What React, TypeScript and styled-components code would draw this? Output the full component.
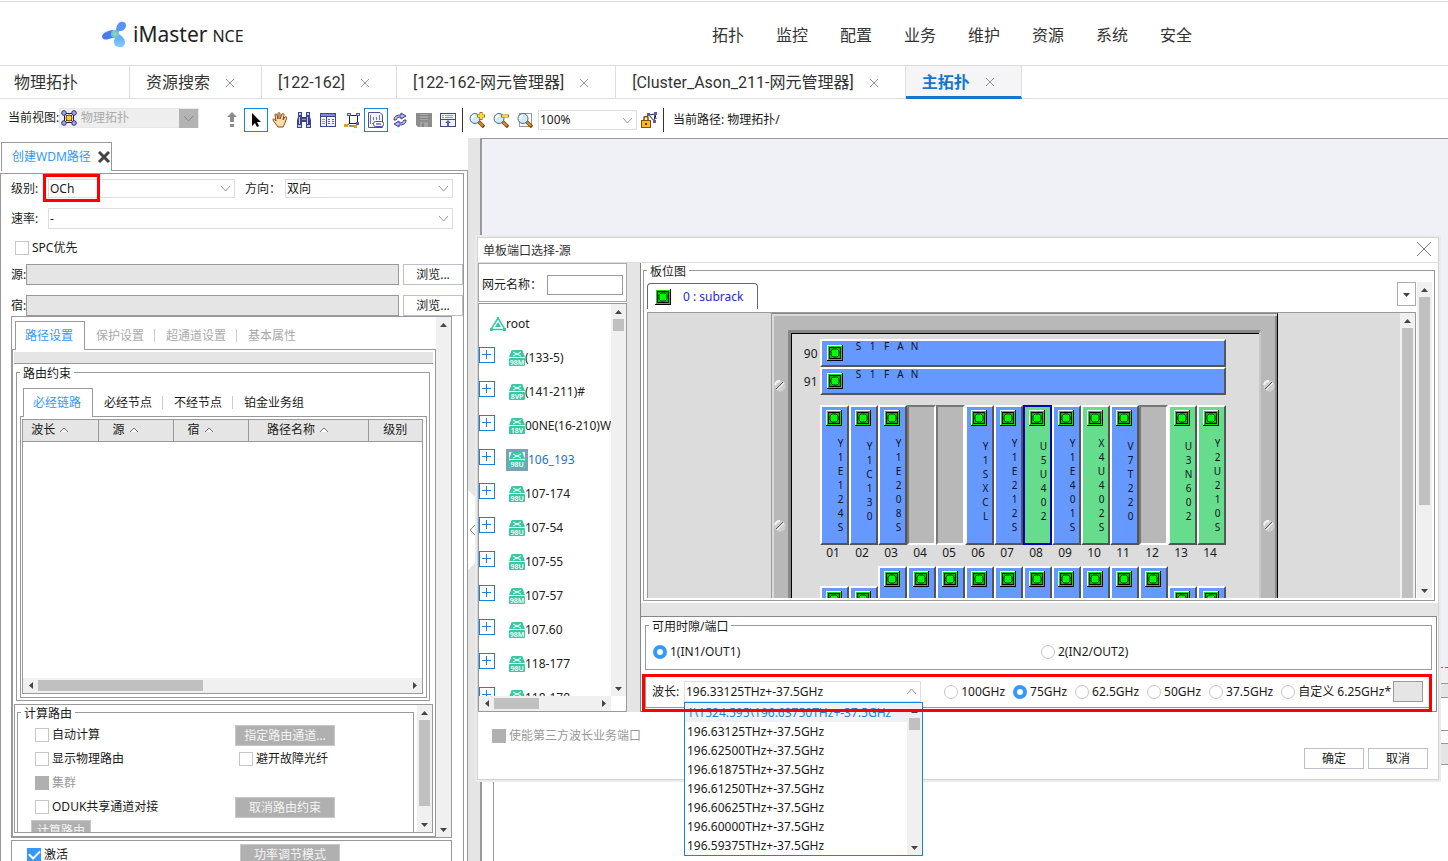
import React, { useState } from "react";
import type { ReactNode } from "react";
import styled, { createGlobalStyle, css } from "styled-components";

const line = "#999999";
const grey = "#e5e5e5";
const blue = "#3399ff";

const GlobalStyle = createGlobalStyle`
  * { box-sizing: border-box; }
  body {
    margin: 0;
    background: #fff;
    color: #1a1a1a;
    font: 12px/16px "Noto Sans", "Noto Sans CJK SC", sans-serif;
  }
  button, input, select { font: inherit; color: inherit; margin: 0; border-radius: 0; outline: none; }
  button { padding: 0; border: 0; background: none; }
  svg { display: block; flex: none; }
  ul { margin: 0; padding: 0; list-style: none; }
`;

/* ---------- page frame ---------- */

const Page = styled.div`
  display: flex;
  flex-direction: column;
  height: 100vh;
  overflow: hidden;
`;

const Header = styled.header`
  display: flex;
  align-items: center;
  height: 65px;
  margin-top: 1px;
  padding: 4px 256px 0 102px;
  border-top: 1px solid #dcdcdc;
  border-bottom: 1px solid #dedede;
`;

const Brand = styled.div`
  display: flex;
  align-items: center;
  gap: 6px;
  padding-bottom: 2px;
  color: #222;
  font-size: 21px;
  line-height: 28px;
`;

const BrandSuffix = styled.span`
  font-size: 16px;
  margin-left: 5px;
`;

const Nav = styled.nav`
  display: flex;
  gap: 32px;
  margin-left: auto;
  a {
    color: #333;
    font: 16px/24px Roboto, "Noto Sans CJK SC", sans-serif;
    text-decoration: none;
  }
`;

const PageTabs = styled.div`
  display: flex;
  flex: none;
  height: 33px;
  border-bottom: 1px solid #dedede;
`;

const PageTab = styled.button<{ $active?: boolean; $plain?: boolean }>`
  display: flex;
  align-items: center;
  gap: 15px;
  padding: ${(p) => (p.$plain ? "2px 51px 0 14px" : "2px 26px 0 16px")};
  border-right: 1px solid #dedede;
  color: #333;
  font: 16px/24px Roboto, "Noto Sans CJK SC", sans-serif;
  ${(p) =>
    p.$active &&
    css`
      margin-bottom: -1px;
      border-bottom: 3px solid #1476d1;
      background: #f5f5f7;
      color: #1476d1;
      font-weight: 700;
      line-height: 21px;
    `}
`;

const Toolbar = styled.div`
  display: flex;
  flex: none;
  height: 39px;
  padding: 9px 0 0 8px;
`;

const ToolLabel = styled.label`
  width: 51px;
  line-height: 20px;
  white-space: nowrap;
`;

const ViewCombo = styled.div`
  display: flex;
  align-items: center;
  width: 140px;
  height: 20px;
  margin-right: 21px;
  padding-left: 1px;
  border: 1px solid #e8e8e8;
  background: #eee;
  color: #aaa;
  select {
    flex: 1;
    height: 18px;
    margin-left: 4px;
    padding: 0;
    border: 0;
    background: none;
    opacity: 1;
    appearance: none;
  }
`;

const ComboArrow = styled.span`
  display: grid;
  place-items: center;
  width: 19px;
  height: 19px;
  background: #b3b3b3;
`;

const ToolButton = styled.button<{ $on?: boolean }>`
  display: grid;
  place-items: center;
  width: 24px;
  height: 24px;
  border: 1px solid ${(p) => (p.$on ? "#1a84d6" : "transparent")};
`;

const ToolDivider = styled.span`
  width: 1px;
  height: 24px;
  margin: 0 2px;
  background: #333;
`;

const PathText = styled.span`
  margin-left: 7px;
  line-height: 24px;
`;

const Body = styled.div`
  position: relative;
  display: flex;
  flex: 1;
  min-height: 0;
`;

/* ---------- shared controls ---------- */

const SelectWrap = styled.div<{ $width?: number; $height?: number }>`
  position: relative;
  display: flex;
  align-items: center;
  width: ${(p) => (p.$width ? `${p.$width}px` : "auto")};
  height: ${(p) => p.$height ?? 19}px;
  padding-right: 3px;
  border: 1px solid #dedede;
  background: #fff;
  select {
    flex: 1;
    min-width: 0;
    height: 100%;
    padding: 0 0 0 1px;
    border: 0;
    background: none;
    appearance: none;
  }
`;

const CheckLabel = styled.label<{ $disabled?: boolean }>`
  display: flex;
  align-items: center;
  gap: 3px;
  color: ${(p) => (p.$disabled ? "#999" : "inherit")};
`;

const CheckBox = styled.input.attrs({ type: "checkbox" })`
  appearance: none;
  display: grid;
  place-items: center;
  width: 14px;
  height: 14px;
  border: 1px solid #c6c6c6;
  background: #fff;
  &:disabled { background: #b0b0b0; border-color: #b0b0b0; }
  &:checked { background: ${blue}; border-color: ${blue}; }
  &:checked::before {
    content: "";
    width: 9px;
    height: 5px;
    margin-top: -3px;
    border: solid #fff;
    border-width: 0 0 2px 2px;
    transform: rotate(-45deg);
  }
`;

const Radio = styled.input.attrs({ type: "radio" })`
  appearance: none;
  width: 14px;
  height: 14px;
  border: 1px solid #c6c6c6;
  border-radius: 50%;
  background: #fff;
  &:checked { border: 4px solid ${blue}; }
`;

const PushButton = styled.button<{ $width: number }>`
  width: ${(p) => p.$width}px;
  height: 21px;
  border: 1px solid #bcc0cc;
  background: #fff;
  line-height: 19px;
  &:disabled {
    border-color: #c8c8c8;
    background: #b0b0b0;
    color: #f4f4f4;
  }
`;

const ReadField = styled.input<{ $width?: number; $filled?: boolean }>`
  width: ${(p) => (p.$width ? `${p.$width}px` : "auto")};
  height: 21px;
  padding: 0 4px;
  border: 1px solid ${line};
  background: ${(p) => (p.$filled ? grey : "#fff")};
`;

const Group = styled.fieldset`
  min-width: 0;
  margin: 0;
  padding: 0 2px 2px 3px;
  border: 1px solid ${line};
  legend {
    height: 15px;
    padding: 0 3px;
    line-height: 17px;
  }
`;

const HighlightFrame = styled.div`
  position: absolute;
  z-index: 3;
  border: 3px solid #f00;
  pointer-events: none;
`;

const LevelFrame = styled(HighlightFrame)`
  top: -6px;
  left: -6px;
  width: 57px;
  height: 28px;
`;

const Bar = styled.div<{ $horizontal?: boolean }>`
  display: flex;
  flex: none;
  flex-direction: ${(p) => (p.$horizontal ? "row" : "column")};
  ${(p) => (p.$horizontal ? "height: 15px;" : "width: 15px;")}
  background: #f0f0f0;
`;

const BarButton = styled.button`
  display: grid;
  place-items: center;
  flex: none;
  width: 15px;
  height: 15px;
`;

const BarTrack = styled.div<{ $horizontal?: boolean }>`
  display: flex;
  flex: 1;
  flex-direction: ${(p) => (p.$horizontal ? "row" : "column")};
  min-width: 0;
  min-height: 0;
  padding: ${(p) => (p.$horizontal ? "2px 0" : "0 2px")};
`;

const BarThumb = styled.div<{ $horizontal?: boolean; $size: number }>`
  ${(p) => (p.$horizontal ? "width" : "height")}: ${(p) => p.$size}px;
  background: #c0c0c0;
`;

const arrows = {
  up: "M0 6L3.500 2L7 6Z",
  down: "M0 2L3.500 6L7 2Z",
  left: "M6 0L2 3.500L6 7Z",
  right: "M2 0L6 3.500L2 7Z",
};

function Arrow({ dir }: { dir: keyof typeof arrows }) {
  return (
    <svg width="7" height="7" viewBox="0 0 7 7">
      <path d={arrows[dir]} fill="#444" />
    </svg>
  );
}

function ScrollBar({ horizontal, thumb, noEnd }: { horizontal?: boolean; thumb?: number; noEnd?: boolean }) {
  return (
    <Bar $horizontal={horizontal}>
      <BarButton type="button" aria-label={horizontal ? "向左" : "向上"}>
        <Arrow dir={horizontal ? "left" : "up"} />
      </BarButton>
      <BarTrack $horizontal={horizontal}>
        {thumb ? <BarThumb $horizontal={horizontal} $size={thumb} /> : null}
      </BarTrack>
      {!noEnd && (
        <BarButton type="button" aria-label={horizontal ? "向右" : "向下"}>
          <Arrow dir={horizontal ? "right" : "down"} />
        </BarButton>
      )}
    </Bar>
  );
}

function Chevron({ up, color = "#999" }: { up?: boolean; color?: string }) {
  return (
    <svg width="11" height="7" viewBox="0 0 11 7">
      <path d={up ? "M1 6L5.500 1L10 6" : "M1 1L5.500 6L10 1"} fill="none" stroke={color} />
    </svg>
  );
}

function Select({ id, value, width, height, children }: { id: string; value: string; width?: number; height?: number; children?: ReactNode }) {
  return (
    <SelectWrap $width={width} $height={height}>
      <select id={id} defaultValue={value}>
        <option>{value}</option>
      </select>
      <Chevron />
      {children}
    </SelectWrap>
  );
}

/* ---------- icons ---------- */

function Logo() {
  return (
    <svg width="25" height="27" viewBox="0 0 25 27">
      <defs>
        <linearGradient id="petal" x1="0" y1="0" x2="0" y2="1">
          <stop offset="0" stopColor="#5ba4fa" />
          <stop offset="1" stopColor="#86ccff" />
        </linearGradient>
      </defs>
      <path d="M14 10C14 6 15 3 18 1C21 0 24 1 24 4C24 8 21 10 18 10C17 10 16 11 16 12Z" fill="#5b93fb" />
      <path d="M11 9C8 9 6 10 4 11C1 12 0 14 0 16C1 19 4 19 7 18C9 17 10 17 12 17Z" fill="#4a7bf5" />
      <path d="M14 16L17 13C19 15 23 17 23 21C23 25 20 27 17 26C13 26 12 23 12 20C12 18 13 17 14 16Z" fill="url(#petal)" />
      <ellipse cx="13" cy="13" rx="4" ry="4" fill="#74c4c4" />
      <ellipse cx="13" cy="13" rx="2" ry="2" fill="#8ad3c4" />
    </svg>
  );
}

function CloseMark({ size = 10, color = "#999", weight = 1 }: { size?: number; color?: string; weight?: number }) {
  return (
    <svg width={size} height={size} viewBox={`0 0 ${size} ${size}`}>
      <path
        d={`M1 1L${size - 1} ${size - 1}M${size - 1} 1L1 ${size - 1}`}
        stroke={color}
        strokeWidth={weight}
        fill="none"
      />
    </svg>
  );
}

function TopologyIcon() {
  return (
    <svg width="16" height="16" viewBox="0 0 16 16">
      <path d="M3 3L13 13M13 3L3 13" stroke="#222" />
      <rect x="3.500" y="3.500" width="9" height="9" fill="none" stroke="#222" />
      <circle cx="8" cy="8" r="3" fill="#ffc933" stroke="#7a4a00" />
      {[[3, 3], [13, 3], [3, 13], [13, 13]].map(([x, y]) => (
        <circle key={`${x}-${y}`} cx={x} cy={y} r="2.300" fill="#a4a4ee" stroke="#33337a" />
      ))}
    </svg>
  );
}

const lens = (
  <>
    <path d="M9 9L15 15" stroke="#7a3f0a" strokeWidth="3.500" />
    <path d="M10 10L14 14" stroke="#e08a2a" strokeWidth="2" />
    <circle cx="6" cy="6.500" r="5" fill="#cfeaf8" stroke="#4a6d8c" />
    <path d="M3 7A3 3 0 0 1 6 3.500" stroke="#fff" strokeWidth="2" fill="none" />
  </>
);

const glyphs: Record<string, ReactNode> = {
  up: <path d="M8 0L13 5H10V10H6V5H3ZM6 12H10V15H6Z" fill="#8c8c8c" />,
  pointer: <path d="M4 1V14L7 11L9 15L11 14L9 10H13Z" fill="#000" />,
  hand: (
    <path
      d="M6 15C4 12 2 10 1 8C1 6 3 7 4 9L3 3C3 1 5 2 5 3L6 7V2C6 0 8 0 8 2V7L10 2C11 1 12 2 12 3L11 8L13 5C15 4 15 6 14 8C13 11 12 13 11 15Z"
      fill="#ffdcae"
      stroke="#8a4510"
    />
  ),
  binoculars: (
    <>
      <path d="M2 0H6V5H10V0H14V5L15 8V16H10V10H6V16H1V8L2 5Z" fill="#3d4388" />
      <path d="M3 1H5V3H3ZM11 1H13V3H11ZM3 5H4V12H3ZM11 5H12V12H11ZM2 13H5V15H2ZM11 13H14V15H11Z" fill="#c3c8f5" />
      <path d="M6 7H10V8H6Z" fill="#8a92dd" />
    </>
  ),
  table: (
    <>
      <rect x="0.500" y="1.500" width="15" height="13" fill="#f3f3ff" stroke="#3d4590" />
      <rect x="1" y="2" width="14" height="2" fill="#8088dc" />
      <path d="M1 4.500H15M6.500 5V14" stroke="#3d4590" />
      <path d="M2 7.500H5M2 9.500H5M2 11.500H5" stroke="#e08a2a" />
      <path d="M8 7.500H10M12 7.500H14M8 9.500H10M12 9.500H14M8 11.500H10M12 11.500H14" stroke="#5a62b5" />
    </>
  ),
  subnet: (
    <>
      <rect x="5.500" y="3.500" width="8" height="8" fill="#fff" stroke="#222" />
      <path d="M6 11L2 14M5 14H13" stroke="#222" />
      <path d="M3 1H7V4H3ZM12 1H16V4H12ZM12 10H15V13H12Z" fill="#5a5ab8" />
      <path d="M4 2H6V3H4ZM13 2H15V3H13Z" fill="#c9c9f6" />
      <path d="M0 12H4V15H0ZM10 13H13V16H10Z" fill="#e6a100" />
    </>
  ),
  export: (
    <>
      <path d="M0.500 0.500H12L14.500 3V15.500H0.500Z" fill="#f3f3ff" stroke="#4a50a0" />
      <path d="M2.500 3V12M4 11.500H6M5.500 8V5M8.500 8V5M11.500 8V3" stroke="#6c75c9" />
      <rect x="5.500" y="9.500" width="10" height="5" rx="2" fill="#fff" stroke="#4a50a0" />
      <path d="M8 12H13" stroke="#8a90dd" strokeWidth="2" />
    </>
  ),
  refresh: (
    <path
      d="M2 8C2 4 5 3 9 3V1L14 4L9 7V5C6 5 5 6 4 8ZM14 8C14 12 11 13 7 13V15L2 12L7 9V11C10 11 11 10 12 8Z"
      fill="#b4b4ee"
      stroke="#3d3d8f"
    />
  ),
  save: (
    <>
      <path d="M0 1H16V15H2L0 13Z" fill="#8c8c8c" />
      <path d="M4 2H12V8H4ZM4 10H12V15H4Z" fill="#a4a4a4" />
      <path d="M4 3.500H12M4 6.500H12" stroke="#868686" />
      <path d="M6 11H8V15H6Z" fill="#868686" />
    </>
  ),
  panel: (
    <>
      <rect x="0.500" y="1.500" width="15" height="13" fill="#f3f3ff" stroke="#3d4590" />
      <path d="M1 7.500H15" stroke="#3d4590" />
      <path d="M2 3.500H4M2 5.500H4" stroke="#e08a2a" />
      <path d="M5 3.500H13M5 5.500H13" stroke="#8a92dd" />
      <path d="M8 8L11 11H9V14H7V11H5Z" fill="#5a62b5" />
    </>
  ),
  zoomIn: (
    <>
      {lens}
      <path d="M12 0V8M8 4H16" stroke="#a07000" strokeWidth="3" />
      <path d="M12 1V7M9 4H15" stroke="#ffd83a" strokeWidth="2" />
    </>
  ),
  zoomOut: (
    <>
      {lens}
      <path d="M8 4H16" stroke="#a07000" strokeWidth="3" />
      <path d="M9 4H15" stroke="#ffd83a" strokeWidth="2" />
    </>
  ),
  zoomArea: (
    <>
      <rect x="2.500" y="1.500" width="12" height="13" fill="none" stroke="#333" strokeDasharray="1 1" />
      {lens}
    </>
  ),
  lock: (
    <>
      <path d="M8 3L14 2L13 9L8 3M14 2L15 7" stroke="#222" fill="none" />
      <path d="M6 1H9V4H6ZM13 0H16V3H13ZM12 8H15V11H12Z" fill="#5a5ab8" />
      <path d="M3 8V6C3 4 7 4 7 6V8" stroke="#7a4a00" strokeWidth="1.500" fill="none" />
      <rect x="0.500" y="8.500" width="9" height="7" fill="#ffb81f" stroke="#8a5200" />
      <path d="M5 11V13" stroke="#5a3400" strokeWidth="2" />
    </>
  ),
};

function Glyph({ name }: { name: string }) {
  return (
    <svg width="16" height="16" viewBox="0 0 16 16">
      {glyphs[name]}
    </svg>
  );
}

function PortIcon() {
  return (
    <svg width="16" height="16" viewBox="0 0 16 16">
      <path d="M0 0H16V16H0Z" fill="#000" />
      <path d="M0 0H15V15H0Z" fill="#fff" />
      <path d="M1 1H15V15H1Z" fill="#00e600" />
      <rect x="2.500" y="2.500" width="11" height="11" fill="#0b0" stroke="#000" />
      <path d="M6 4H10L12 6V10L10 12H6L4 10V6Z" fill="#0f0" stroke="#031" />
    </svg>
  );
}

function DeviceIcon({ model }: { model: string }) {
  return (
    <svg width="16" height="16" viewBox="0 0 16 16">
      <path d="M4 0H12C14 0 14 1 14 2L16 7H0L2 2C2 1 2 0 4 0Z" fill="#35c9a4" />
      <rect y="8" width="16" height="8" rx="1" fill="#35c9a4" />
      <path d="M4 2L12 6M12 2L4 6" stroke="#fff" fill="none" />
      <text x="8" y="15" textAnchor="middle" fontSize="7" fontWeight="600" fill="#fff">
        {model}
      </text>
    </svg>
  );
}

function RootIcon() {
  return (
    <svg width="16" height="14" viewBox="0 0 16 14">
      <path d="M8 1L15 12.500H1Z" fill="none" stroke="#35c9a4" strokeWidth="1.500" />
      <path d="M8 5L11 10H5Z" fill="#35c9a4" />
      <path d="M7 0H9V2H7ZM0 11H3V14H0ZM13 11H16V14H13Z" fill="#35c9a4" />
    </svg>
  );
}

/* ---------- path creation panel ---------- */

const Side = styled.aside`
  display: flex;
  flex: none;
  flex-direction: column;
  width: 468px;
  padding-top: 4px;
  overflow: hidden;
`;

const SideTabs = styled.div`
  display: flex;
  flex: none;
  height: 29px;
  padding-left: 1px;
  &::after { content: ""; flex: 1; border-bottom: 1px solid ${line}; }
`;

const SideTab = styled.button`
  display: flex;
  align-items: center;
  justify-content: space-between;
  width: 111px;
  padding: 0 1px 0 10px;
  border: 1px solid ${line};
  border-bottom: 0;
  color: ${blue};
`;

const SideBody = styled.div`
  flex: 1;
  padding: 2px 3px 0 0;
  border-right: 1px solid ${line};
`;

const SideForm = styled.form`
  display: flex;
  flex-direction: column;
  gap: 10px;
  height: 100%;
  padding: 5px 0 0 10px;
  border: 1px solid ${line};
  border-bottom: 0;
`;

const FormRow = styled.div`
  display: flex;
  flex: none;
  align-items: center;
`;

const FieldLabel = styled.label<{ $width: number }>`
  width: ${(p) => p.$width}px;
  white-space: nowrap;
`;

const BrowseButton = styled(PushButton)`
  margin-left: 4px;
`;

const DirectionLabel = styled(FieldLabel)`
  margin-left: 10px;
`;

const CheckRow = styled.div`
  flex: none;
  height: 15px;
  padding: 1px 0 0 4px;
`;

const SetupPane = styled.section`
  display: flex;
  flex: none;
  width: 441px;
  height: 522px;
  margin-top: -10px;
  border: 1px solid ${line};
`;

const SetupMain = styled.div`
  display: flex;
  flex: 1;
  flex-direction: column;
  padding-top: 4px;
`;

const TabStrip = styled.div`
  display: flex;
  flex: none;
  height: 29px;
  margin-bottom: -1px;
  padding-left: 3px;
`;

const StripTab = styled.button<{ $active?: boolean }>`
  position: relative;
  padding: 0 11px;
  &:disabled { color: #aaa; }
  &:not(:last-child)::after {
    content: "";
    position: absolute;
    top: 8px;
    right: 0;
    height: 13px;
    border-right: 1px solid #ccc;
  }
  ${(p) =>
    p.$active &&
    css`
      width: 70px;
      padding: 0 2px 0 0;
      border: 1px solid ${line};
      border-bottom: 0;
      background: #fff;
      color: ${blue};
      &:not(:last-child)::after { display: none; }
    `}
`;

const TabBody = styled.div`
  flex: 1;
  padding: 2px 2px 0 1px;
  border: 1px solid ${line};
`;

const Ribbon = styled.div`
  height: 12px;
  border-bottom: 1px solid ${line};
  background: ${grey};
`;

const RouteGroup = styled(Group)`
  margin: 1px 3px 0 2px;
`;

const RouteTabs = styled(TabStrip)`
  margin-top: 8px;
`;

const RouteBody = styled(TabBody)`
  padding: 2px 3px 3px 1px;
`;

const TableBox = styled.div`
  display: flex;
  flex-direction: column;
  height: 275px;
  border: 1px solid ${line};
`;

const RouteTable = styled.table`
  width: 100%;
  border-collapse: collapse;
  table-layout: fixed;
  th {
    height: 21px;
    padding: 0;
    border-right: 1px solid ${line};
    border-bottom: 1px solid ${line};
    background: ${grey};
    font-weight: 400;
  }
  th:last-child { border-right: 0; }
`;

const HeadCell = styled.span<{ $sorted: boolean }>`
  display: flex;
  align-items: center;
  justify-content: center;
  gap: 4px;
  padding-right: ${(p) => (p.$sorted ? 20 : 0)}px;
`;

const TableSpace = styled.div`
  flex: 1;
`;

const CalcPane = styled.div`
  display: flex;
  height: 129px;
  margin-top: 3px;
  border: 1px solid ${line};
  overflow: hidden;
`;

const CalcGroup = styled(Group)`
  flex: 1;
  height: 150px;
  margin: 0 3px 0 2px;
  padding: 0 0 0 3px;
`;

const CalcGrid = styled.div`
  display: grid;
  grid-template-columns: 200px 1fr;
  grid-auto-rows: 24px;
  align-items: center;
  padding: 3px 0 0 14px;
`;

const CalcInset = styled.div`
  padding-left: 4px;
`;

const CalcButton = styled(PushButton)`
  margin: 1px 0 0 10px;
`;

const ActivatePane = styled.div`
  display: flex;
  flex: none;
  align-items: center;
  gap: 172px;
  width: 441px;
  height: 28px;
  margin-top: -8px;
  padding-left: 15px;
  border: 1px solid ${line};
  border-bottom: 0;
`;

function SortMark() {
  return (
    <svg width="10" height="6" viewBox="0 0 10 6">
      <path d="M1 5L5 1L9 5" fill="#fff" stroke="#777" />
    </svg>
  );
}

const routeColumns = [
  { name: "波长", width: 75, sort: true },
  { name: "源", width: 75, sort: true },
  { name: "宿", width: 75, sort: true },
  { name: "路径名称", width: 120, sort: true },
  { name: "级别", width: 54, sort: false },
];

function RouteSetup() {
  return (
    <SetupPane>
      <SetupMain>
        <TabStrip>
          <StripTab type="button" $active>路径设置</StripTab>
          <StripTab type="button" disabled>保护设置</StripTab>
          <StripTab type="button" disabled>超通道设置</StripTab>
          <StripTab type="button" disabled>基本属性</StripTab>
        </TabStrip>
        <TabBody>
          <Ribbon />
          <RouteGroup>
            <legend>路由约束</legend>
            <RouteTabs>
              <StripTab type="button" $active>必经链路</StripTab>
              <StripTab type="button">必经节点</StripTab>
              <StripTab type="button">不经节点</StripTab>
              <StripTab type="button">铂金业务组</StripTab>
            </RouteTabs>
            <RouteBody>
              <TableBox>
                <RouteTable>
                  <colgroup>
                    {routeColumns.map((c) => (
                      <col key={c.name} width={c.width} />
                    ))}
                  </colgroup>
                  <thead>
                    <tr>
                      {routeColumns.map((c) => (
                        <th key={c.name} scope="col">
                          <HeadCell $sorted={c.sort}>
                            {c.name}
                            {c.sort && <SortMark />}
                          </HeadCell>
                        </th>
                      ))}
                    </tr>
                  </thead>
                </RouteTable>
                <TableSpace />
                <ScrollBar horizontal thumb={165} />
              </TableBox>
            </RouteBody>
          </RouteGroup>
          <CalcPane>
            <CalcGroup>
              <legend>计算路由</legend>
              <CalcGrid>
                <CheckLabel><CheckBox />自动计算</CheckLabel>
                <div><PushButton type="button" $width={100} disabled>指定路由通道...</PushButton></div>
                <CheckLabel><CheckBox />显示物理路由</CheckLabel>
                <CalcInset><CheckLabel><CheckBox />避开故障光纤</CheckLabel></CalcInset>
                <CheckLabel $disabled><CheckBox disabled />集群</CheckLabel>
                <div />
                <CheckLabel><CheckBox />ODUK共享通道对接</CheckLabel>
                <div><PushButton type="button" $width={100} disabled>取消路由约束</PushButton></div>
              </CalcGrid>
              <CalcButton type="button" $width={60} disabled>计算路由</CalcButton>
            </CalcGroup>
            <ScrollBar thumb={86} />
          </CalcPane>
        </TabBody>
      </SetupMain>
      <ScrollBar />
    </SetupPane>
  );
}

function PathPanel() {
  return (
    <Side>
      <SideTabs>
        <SideTab type="button">
          创建WDM路径
          <CloseMark size={12} color="#444" weight={3} />
        </SideTab>
      </SideTabs>
      <SideBody>
        <SideForm>
          <FormRow>
            <FieldLabel $width={37} htmlFor="level">级别:</FieldLabel>
            <Select id="level" value="OCh" width={187}>
              <LevelFrame />
            </Select>
            <DirectionLabel $width={40} htmlFor="direction">方向：</DirectionLabel>
            <Select id="direction" value="双向" width={168} />
          </FormRow>
          <FormRow>
            <FieldLabel $width={37} htmlFor="rate">速率:</FieldLabel>
            <Select id="rate" value="-" width={405} height={21} />
          </FormRow>
          <CheckRow><CheckLabel><CheckBox />SPC优先</CheckLabel></CheckRow>
          <FormRow>
            <FieldLabel $width={15} htmlFor="source">源:</FieldLabel>
            <ReadField id="source" $width={373} $filled readOnly />
            <BrowseButton type="button" $width={60}>浏览...</BrowseButton>
          </FormRow>
          <FormRow>
            <FieldLabel $width={15} htmlFor="sink">宿:</FieldLabel>
            <ReadField id="sink" $width={373} $filled readOnly />
            <BrowseButton type="button" $width={60}>浏览...</BrowseButton>
          </FormRow>
          <RouteSetup />
          <ActivatePane>
            <CheckLabel><CheckBox defaultChecked />激活</CheckLabel>
            <PushButton type="button" $width={100} disabled>功率调节模式</PushButton>
          </ActivatePane>
        </SideForm>
      </SideBody>
    </Side>
  );
}

/* ---------- topology workspace ---------- */

const Splitter = styled.div`
  display: flex;
  flex: none;
  flex-direction: column;
  width: 12px;
  padding-top: 352px;
  background: ${grey};
`;

const Workspace = styled.main`
  display: flex;
  flex: 1;
  flex-direction: column;
  min-width: 0;
  border-top: 1px solid ${line};
  border-left: 2px solid ${line};
`;

const Canvas = styled.div`
  flex: 1;
  background: #f0f1f6;
`;

const StatusArea = styled.div`
  display: flex;
  flex-direction: column;
  height: 194px;
  border-top: 1px dashed #e04040;
`;

const StatusBand = styled.div<{ $height: number; $fill?: string }>`
  flex: none;
  height: ${(p) => p.$height}px;
  border-bottom: 1px solid ${line};
  background: ${(p) => p.$fill ?? "#fff"};
`;

const StatusRest = styled.div`
  flex: 1;
  margin-left: 11px;
  border-left: 1px solid ${line};
`;

/* ---------- port dialog ---------- */

const Dialog = styled.section`
  position: absolute;
  top: 99px;
  right: 9px;
  left: 477px;
  border: 1px solid #d2d2d2;
  background: #fff;
  box-shadow: 0 0 0 2px #ebebeb;
`;

const DialogTitle = styled.div`
  display: flex;
  align-items: center;
  justify-content: space-between;
  height: 25px;
  padding: 2px 6px 0 5px;
  border-bottom: 1px solid #dedede;
  color: #333;
`;

const CloseButton = styled.button`
  margin-bottom: 5px;
`;

const DialogMain = styled.div`
  display: flex;
  height: 449px;
`;

const TreeColumn = styled.div`
  display: flex;
  flex: none;
  flex-direction: column;
  gap: 1px;
  width: 149px;
`;

const SearchBox = styled.div`
  display: flex;
  align-items: center;
  height: 39px;
  padding: 5px 3px 0;
  border: 1px solid #aaa;
`;

const SearchField = styled(ReadField)`
  height: 20px;
`;

const TreeBox = styled.div`
  display: flex;
  flex: 1;
  flex-direction: column;
  min-height: 0;
  border: 1px solid ${line};
`;

const TreeScroll = styled.div`
  display: flex;
  flex: 1;
  min-height: 0;
`;

const TreeFoot = styled.div`
  display: grid;
  grid-template-columns: 1fr 15px;
`;

const Tree = styled.ul`
  flex: 1;
  min-width: 0;
  padding-top: 3px;
  overflow: hidden;
`;

const TreeRow = styled.li<{ $selected?: boolean }>`
  display: flex;
  align-items: center;
  height: 34px;
  gap: ${(p) => (p.$selected ? 11 : 14)}px;
  color: ${(p) => (p.$selected ? "#1475d2" : "#222")};
  white-space: nowrap;
`;

const TreeNode = styled.span<{ $selected?: boolean }>`
  display: flex;
  align-items: center;
  svg { ${(p) => p.$selected && "box-sizing: content-box; border: 3px solid #7ba0b8;"} }
`;

const RootNode = styled.span`
  display: flex;
  align-items: center;
  padding-left: 11px;
`;

const Expander = styled.button`
  display: grid;
  place-items: center;
  flex: none;
  width: 16px;
  height: 16px;
  margin-bottom: 6px;
  border: 1px solid #1a84d6;
`;

const DialogSplit = styled.div`
  flex: none;
  width: 14px;
  border-right: 1px solid #888;
  background: ${grey};
`;

const PortColumn = styled.div`
  flex: 1;
  min-width: 0;
`;

const BoardGroup = styled(Group)`
  height: 338px;
  margin: 0 3px 0 2px;
  padding: 0 2px 0 3px;
`;

const BoardLayout = styled.div`
  display: flex;
  gap: 1px;
  height: 316px;
  margin-top: 4px;
`;

const BoardMain = styled.div`
  display: flex;
  flex: 1;
  flex-direction: column;
  min-width: 0;
`;

const BoardTabs = styled.div`
  display: flex;
  justify-content: space-between;
  height: 30px;
`;

const BoardTab = styled.button`
  display: flex;
  align-items: center;
  gap: 12px;
  width: 111px;
  height: 26px;
  margin-top: 1px;
  padding-left: 7px;
  border: 1px solid #666;
  border-bottom: 0;
  border-radius: 4px 4px 0 0;
  color: #2626e8;
`;

const MenuButton = styled.button`
  display: grid;
  place-items: center;
  width: 19px;
  height: 24px;
  border: 1px solid #aaa;
`;

const Viewport = styled.div`
  display: flex;
  flex: 1;
  min-height: 0;
  border: 1px solid ${line};
  border-bottom: 0;
  background: #dcdcdc;
  overflow: hidden;
`;

const ViewArea = styled.div`
  display: flex;
  flex: 1;
  justify-content: center;
`;

const Chassis = styled.div`
  display: flex;
  width: 507px;
  height: 340px;
  padding-top: 16px;
  border: solid;
  border-width: 1px 1px 0;
  border-color: #888 #000 #888 #999;
  background: #b8b8b8;
  box-shadow: inset 2px 2px #dcdcdc, inset -2px 0 #888;
`;

const Rail = styled.div`
  display: flex;
  flex: none;
  flex-direction: column;
  align-items: flex-end;
  gap: 128px;
  width: 16px;
  padding: 50px 2px 0 0;
`;

const ChassisInner = styled.div`
  flex: 1;
  padding-top: 6px;
  border: solid;
  border-width: 3px 2px 0 3px;
  border-color: #888 #c8c8c8 #888 #888;
  background: #dcdcdc;
  box-shadow: inset 1px 1px #000;
`;

const FanRow = styled.div`
  display: flex;
  align-items: center;
  width: 435px;
  height: 28px;
`;

const FanNumber = styled.span`
  width: 29px;
  padding: 1px 2px 0 0;
  text-align: right;
`;

const Fan = styled.div`
  display: flex;
  flex: 1;
  align-items: center;
  gap: 9px;
  height: 28px;
  padding-left: 5px;
  border: 2px solid;
  border-color: #fff #555 #555 #fff;
  background: #6699ff;
`;

const FanName = styled.span`
  display: flex;
  align-self: flex-start;
  color: #112;
  font-size: 10px;
  line-height: 10px;
  span { width: 14px; text-align: center; }
`;

const SlotRow = styled.div<{ $top: number }>`
  display: grid;
  grid-template-columns: repeat(14, 29px);
  margin: ${(p) => p.$top}px 0 0 29px;
`;

const boardFill = { blue: "#6699ff", green: "#66dd8c", empty: "#b8b8b8" };

const Slot = styled.div<{ $kind: keyof typeof boardFill; $selected?: boolean }>`
  display: flex;
  flex-direction: column;
  align-items: center;
  height: 140px;
  padding-top: 3px;
  border: 2px solid;
  border-color: #fff #555 #555 #fff;
  ${(p) => p.$kind === "empty" && "border-color: #777 #fff #fff #777;"}
  ${(p) => p.$selected && "border-color: #0000b8;"}
  background: ${(p) => boardFill[p.$kind]};
`;

const SlotName = styled.span<{ $short: boolean }>`
  display: flex;
  flex-direction: column;
  align-self: flex-end;
  width: 12px;
  margin-top: ${(p) => (p.$short ? 13 : 10)}px;
  color: #112;
  font-size: 10px;
  line-height: 14px;
  text-align: center;
`;

const SlotNumber = styled.span`
  padding-right: 2px;
  line-height: 16px;
  text-align: center;
`;

const LowerSlot = styled(Slot)<{ $short?: boolean }>`
  height: 60px;
  margin-top: ${(p) => (p.$short ? 20 : 0)}px;
`;

const PortRibbon = styled.div`
  height: 13px;
  margin-top: 2px;
  background: ${grey};
`;

const PortBox = styled.div`
  position: relative;
  height: 96px;
  margin-right: 1px;
  padding: 1px 4px 3px;
  border: 1px solid #888;
  border-left: 0;
`;

const PortGroup = styled(Group)`
  height: 52px;
`;

const PortGrid = styled.div`
  display: grid;
  grid-template-columns: 1fr 1fr;
  padding: 11px 0 0 4px;
`;

const WaveRow = styled.div`
  display: flex;
  align-items: center;
  height: 33px;
  margin-top: 5px;
  padding: 0 8px 0 6px;
  border: 1px solid ${line};
`;

const WaveOptions = styled.div`
  display: flex;
  align-items: center;
  gap: 8px;
  margin: 0 2px 0 auto;
`;

const WaveFrame = styled(HighlightFrame)`
  top: 57px;
  right: 4px;
  bottom: -1px;
  left: 1px;
`;

const WaveList = styled.div`
  position: absolute;
  z-index: 2;
  top: 20px;
  left: -1px;
  display: flex;
  width: 239px;
  height: 154px;
  border: 1px solid #1a84d6;
  background: #fff;
  overflow: hidden;
`;

const WaveItems = styled.ul`
  flex: 1;
`;

const WaveItem = styled.li<{ $current?: boolean }>`
  height: 19px;
  padding-left: 2px;
  line-height: 19px;
  white-space: nowrap;
  ${(p) => p.$current && "background: #f0f1f6; color: #1a84d6;"}
`;

const DialogFoot = styled.div`
  display: flex;
  align-items: flex-start;
  justify-content: space-between;
  height: 67px;
  padding: 16px 10px 10px 14px;
`;

const FootButtons = styled.div`
  display: flex;
  gap: 4px;
  align-self: flex-end;
`;

const devices = [
  ["(133-5)", "98M"],
  ["(141-211)#", "8VP"],
  ["00NE(16-210)W", "18V"],
  ["106_193", "98U"],
  ["107-174", "98U"],
  ["107-54", "98U"],
  ["107-55", "98U"],
  ["107-57", "98M"],
  ["107.60", "98M"],
  ["118-177", "98U"],
  ["118-178", "98U"],
];

const boards: { name: string; kind: keyof typeof boardFill }[] = [
  { name: "Y1E124S", kind: "blue" },
  { name: "Y1C130", kind: "blue" },
  { name: "Y1E208S", kind: "blue" },
  { name: "", kind: "empty" },
  { name: "", kind: "empty" },
  { name: "Y1SXCL", kind: "blue" },
  { name: "Y1E212S", kind: "blue" },
  { name: "U5U402", kind: "green" },
  { name: "Y1E401S", kind: "blue" },
  { name: "X4U402S", kind: "green" },
  { name: "V7T220", kind: "blue" },
  { name: "", kind: "empty" },
  { name: "U3N602", kind: "green" },
  { name: "Y2U210S", kind: "green" },
];

const frequencies = ["196.63125", "196.62500", "196.61875", "196.61250", "196.60625", "196.60000", "196.59375"];
const spacings = ["100GHz", "75GHz", "62.5GHz", "50GHz", "37.5GHz", "自定义 6.25GHz*"];

const letters = (text: string) => text.split("").map((c, i) => <span key={i}>{c}</span>);
const pad = (n: number) => String(n).padStart(2, "0");

function Screw() {
  return (
    <svg width="12" height="12" viewBox="0 0 12 12">
      <circle cx="6" cy="6" r="5.500" fill="#cfcfcf" />
      <path d="M1 5A5 5 0 0 1 6 1" stroke="#f4f4f4" strokeWidth="2" fill="none" />
      <path d="M2 9L9 2" stroke="#555" />
      <path d="M3 10L10 3" stroke="#fff" />
    </svg>
  );
}

function Shelf() {
  return (
    <Chassis>
      <Rail><Screw /><Screw /></Rail>
      <ChassisInner>
        {["90", "91"].map((n) => (
          <FanRow key={n}>
            <FanNumber>{n}</FanNumber>
            <Fan>
              <PortIcon />
              <FanName>{letters("S1FAN")}</FanName>
            </Fan>
          </FanRow>
        ))}
        <SlotRow $top={10}>
          {boards.map((b, i) => (
            <Slot key={i} $kind={b.kind} $selected={i === 7}>
              {b.name && <PortIcon />}
              {b.name && <SlotName $short={b.name.length < 7}>{letters(b.name)}</SlotName>}
            </Slot>
          ))}
          {boards.map((_, i) => (
            <SlotNumber key={i}>{pad(i + 1)}</SlotNumber>
          ))}
        </SlotRow>
        <SlotRow $top={5}>
          {boards.map((_, i) => (
            <LowerSlot key={i} $kind="blue" $short={i < 2 || i > 11}>
              <PortIcon />
            </LowerSlot>
          ))}
        </SlotRow>
      </ChassisInner>
      <Rail><Screw /><Screw /></Rail>
    </Chassis>
  );
}

function PortDialog() {
  const [port, setPort] = useState(1);
  const [spacing, setSpacing] = useState("75GHz");
  return (
    <Dialog role="dialog" aria-label="单板端口选择-源">
      <DialogTitle>
        单板端口选择-源
        <CloseButton type="button" aria-label="关闭"><CloseMark size={16} color="#777" /></CloseButton>
      </DialogTitle>
      <DialogMain>
        <TreeColumn>
          <SearchBox>
            <FieldLabel $width={65} htmlFor="ne-name">网元名称：</FieldLabel>
            <SearchField id="ne-name" $width={76} />
          </SearchBox>
          <TreeBox>
            <TreeScroll>
              <Tree>
                <TreeRow>
                  <RootNode><RootIcon />root</RootNode>
                </TreeRow>
                {devices.map(([name, model]) => {
                  const selected = name === "106_193";
                  return (
                    <TreeRow key={name} $selected={selected}>
                      <Expander type="button" aria-label={`展开 ${name}`}>
                        <svg width="10" height="10" viewBox="0 0 10 10" shapeRendering="crispEdges">
                          <path d="M0 4H9V5H0ZM4 0H5V9H4Z" fill="#1a84d6" />
                        </svg>
                      </Expander>
                      <TreeNode $selected={selected}><DeviceIcon model={model} />{name}</TreeNode>
                    </TreeRow>
                  );
                })}
              </Tree>
              <ScrollBar thumb={12} />
            </TreeScroll>
            <TreeFoot><ScrollBar horizontal thumb={45} /></TreeFoot>
          </TreeBox>
        </TreeColumn>
        <DialogSplit />
        <PortColumn>
          <BoardGroup>
            <legend>板位图</legend>
            <BoardLayout>
              <BoardMain>
                <BoardTabs>
                  <BoardTab type="button"><PortIcon />0 : subrack</BoardTab>
                  <MenuButton type="button" aria-label="子架列表"><Arrow dir="down" /></MenuButton>
                </BoardTabs>
                <Viewport>
                  <ViewArea><Shelf /></ViewArea>
                  <ScrollBar thumb={270} noEnd />
                </Viewport>
              </BoardMain>
              <ScrollBar thumb={208} />
            </BoardLayout>
          </BoardGroup>
          <PortRibbon />
          <PortBox>
            <PortGroup>
              <legend>可用时隙/端口</legend>
              <PortGrid>
                {[1, 2].map((n) => (
                  <CheckLabel key={n}>
                    <Radio name="port" checked={port === n} onChange={() => setPort(n)} />
                    {`${n}(IN${n}/OUT${n})`}
                  </CheckLabel>
                ))}
              </PortGrid>
            </PortGroup>
            <WaveRow>
              <FieldLabel $width={32} htmlFor="wave">波长:</FieldLabel>
              <SelectWrap $width={237} $height={21}>
                <select id="wave" defaultValue="196.33125THz+-37.5GHz">
                  <option>196.33125THz+-37.5GHz</option>
                </select>
                <Chevron up />
                <WaveList>
                  <WaveItems>
                    <WaveItem $current>1\1524.595\196.63750THz+-37.5GHz</WaveItem>
                    {frequencies.map((f) => (
                      <WaveItem key={f}>{f}THz+-37.5GHz</WaveItem>
                    ))}
                  </WaveItems>
                  <ScrollBar thumb={12} />
                </WaveList>
              </SelectWrap>
              <WaveOptions>
                {spacings.map((s) => (
                  <CheckLabel key={s}>
                    <Radio name="spacing" checked={spacing === s} onChange={() => setSpacing(s)} />
                    {s}
                  </CheckLabel>
                ))}
              </WaveOptions>
              <ReadField $width={30} $filled readOnly aria-label="自定义倍数" />
            </WaveRow>
            <WaveFrame />
          </PortBox>
        </PortColumn>
      </DialogMain>
      <DialogFoot>
        <CheckLabel $disabled><CheckBox disabled />使能第三方波长业务端口</CheckLabel>
        <FootButtons>
          <PushButton type="button" $width={60}>确定</PushButton>
          <PushButton type="button" $width={60}>取消</PushButton>
        </FootButtons>
      </DialogFoot>
    </Dialog>
  );
}

/* ---------- application ---------- */

const menu = ["拓扑", "监控", "配置", "业务", "维护", "资源", "系统", "安全"];
const tabs = ["物理拓扑", "资源搜索", "[122-162]", "[122-162-网元管理器]", "[Cluster_Ason_211-网元管理器]", "主拓扑"];
const tools = ["up", "pointer", "hand", "binoculars", "table", "subnet", "export", "refresh", "save", "panel"];
const zoomTools = ["zoomIn", "zoomOut", "zoomArea"];

const ZoomSelect = styled.div`
  padding: 2px 0 0 1px;
`;

export default function App() {
  return (
    <Page>
      <GlobalStyle />
      <Header>
        <Brand>
          <Logo />
          <span>iMaster<BrandSuffix>NCE</BrandSuffix></span>
        </Brand>
        <Nav>
          {menu.map((m) => (
            <a key={m} href="#">{m}</a>
          ))}
        </Nav>
      </Header>
      <PageTabs>
        {tabs.map((t, i) => (
          <PageTab key={t} type="button" $plain={i === 0} $active={i === tabs.length - 1}>
            {t}
            {i > 0 && <CloseMark />}
          </PageTab>
        ))}
      </PageTabs>
      <Toolbar>
        <ToolLabel htmlFor="view">当前视图:</ToolLabel>
        <ViewCombo>
          <TopologyIcon />
          <select id="view" disabled defaultValue="物理拓扑">
            <option>物理拓扑</option>
          </select>
          <ComboArrow><Chevron color="#888" /></ComboArrow>
        </ViewCombo>
        {tools.map((t) => (
          <ToolButton key={t} type="button" aria-label={t} $on={t === "pointer" || t === "export"}>
            <Glyph name={t} />
          </ToolButton>
        ))}
        <ToolDivider />
        {zoomTools.map((t) => (
          <ToolButton key={t} type="button" aria-label={t}>
            <Glyph name={t} />
          </ToolButton>
        ))}
        <ZoomSelect><Select id="zoom" value="100%" width={99} height={20} /></ZoomSelect>
        <ToolButton type="button" aria-label="lock"><Glyph name="lock" /></ToolButton>
        <ToolDivider />
        <PathText>当前路径: 物理拓扑/</PathText>
      </Toolbar>
      <Body>
        <PathPanel />
        <Splitter>
          <svg width="12" height="80" viewBox="0 0 12 80">
            <path d="M0 0L12 12V68L0 80Z" fill="#fff" />
            <path d="M7 35L2 40L7 45" fill="none" stroke="#888" />
          </svg>
        </Splitter>
        <Workspace>
          <Canvas />
          <StatusArea>
            <StatusBand $height={16} $fill="#f0f0f0" />
            <StatusBand $height={14} $fill={grey} />
            <StatusBand $height={33} />
            <StatusBand $height={13} />
            <StatusBand $height={21} $fill={grey} />
            <StatusRest />
          </StatusArea>
        </Workspace>
        <PortDialog />
      </Body>
    </Page>
  );
}
